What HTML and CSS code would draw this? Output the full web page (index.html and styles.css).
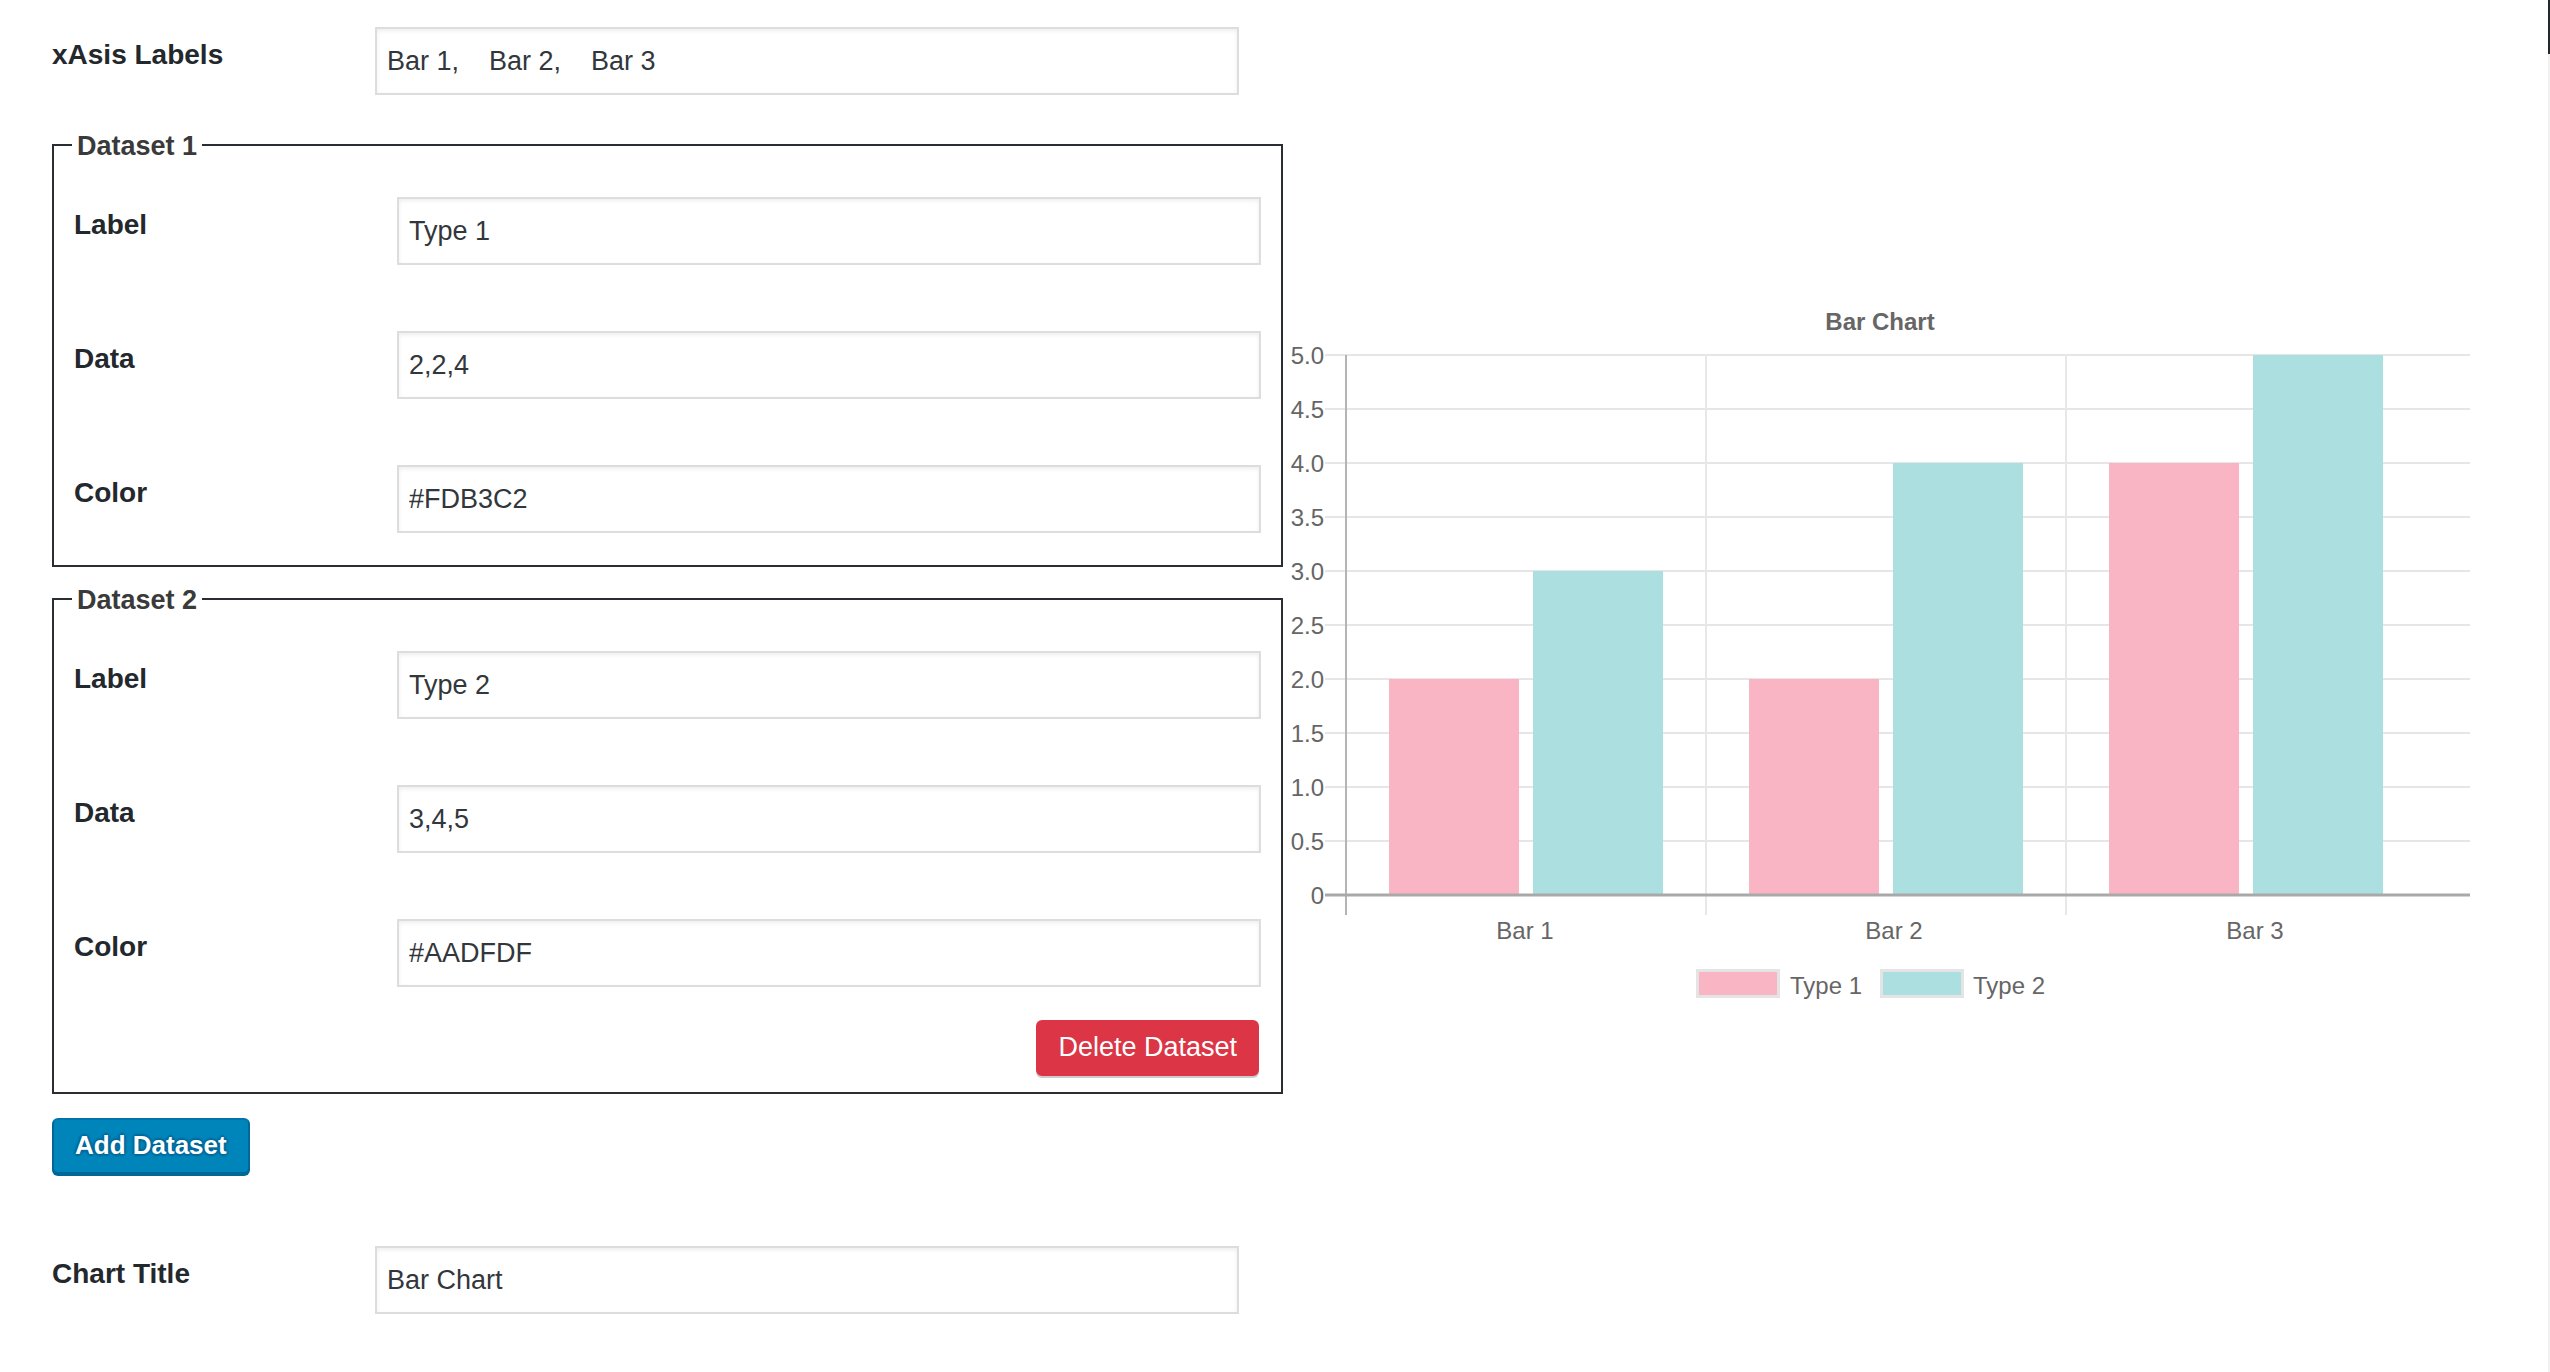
FILE: index.html
```html
<!DOCTYPE html>
<html lang="en">
<head>
<meta charset="utf-8">
<title>Bar Chart Builder</title>
<link rel="stylesheet" href="styles.css">
</head>
<body>
<div class="page">
  <div class="form-col">
    <div class="row">
      <label class="lbl">xAsis Labels</label>
      <input class="ctl" type="text" value="Bar 1,    Bar 2,    Bar 3">
    </div>

    <fieldset class="dataset ds1">
      <legend>Dataset 1</legend>
      <div class="rows">
        <div class="row"><label class="lbl">Label</label><input class="ctl" type="text" value="Type 1"></div>
        <div class="row"><label class="lbl">Data</label><input class="ctl" type="text" value="2,2,4"></div>
        <div class="row"><label class="lbl">Color</label><input class="ctl" type="text" value="#FDB3C2"></div>
      </div>
    </fieldset>

    <fieldset class="dataset ds2">
      <legend>Dataset 2</legend>
      <div class="rows">
        <div class="row"><label class="lbl">Label</label><input class="ctl" type="text" value="Type 2"></div>
        <div class="row"><label class="lbl">Data</label><input class="ctl" type="text" value="3,4,5"></div>
        <div class="row"><label class="lbl">Color</label><input class="ctl" type="text" value="#AADFDF"></div>
      </div>
      <div class="actions"><button class="btn btn-danger" type="button">Delete Dataset</button></div>
    </fieldset>

    <div class="add-wrap"><button class="btn btn-primary" type="button">Add Dataset</button></div>

    <div class="row title-row">
      <label class="lbl">Chart Title</label>
      <input class="ctl" type="text" value="Bar Chart">
    </div>
  </div>

  <div class="chart-col">
    <svg class="chart" width="1200" height="760" viewBox="0 0 1200 760" xmlns="http://www.w3.org/2000/svg">
      <text class="c-title" x="597" y="49.5" text-anchor="middle">Bar Chart</text>

      <g class="grid-h">
        <line x1="42" y1="75" x2="1187" y2="75"/>
        <line x1="42" y1="129" x2="1187" y2="129"/>
        <line x1="42" y1="183" x2="1187" y2="183"/>
        <line x1="42" y1="237" x2="1187" y2="237"/>
        <line x1="42" y1="291" x2="1187" y2="291"/>
        <line x1="42" y1="345" x2="1187" y2="345"/>
        <line x1="42" y1="399" x2="1187" y2="399"/>
        <line x1="42" y1="453" x2="1187" y2="453"/>
        <line x1="42" y1="507" x2="1187" y2="507"/>
        <line x1="42" y1="561" x2="1187" y2="561"/>
      </g>
      <g class="grid-v">
        <line x1="423" y1="75" x2="423" y2="635"/>
        <line x1="783" y1="75" x2="783" y2="635"/>
      </g>

      <g class="bars-1">
        <rect x="106" y="399" width="130" height="216"/>
        <rect x="466" y="399" width="130" height="216"/>
        <rect x="826" y="183" width="130" height="432"/>
      </g>
      <g class="bars-2">
        <rect x="250" y="291" width="130" height="324"/>
        <rect x="610" y="183" width="130" height="432"/>
        <rect x="970" y="75" width="130" height="540"/>
      </g>

      <line class="axis-y" x1="63" y1="75" x2="63" y2="635"/>
      <line class="axis-zero" x1="42" y1="615" x2="1187" y2="615"/>

      <g class="ticks-y" text-anchor="end">
        <text x="41" y="83.5">5.0</text>
        <text x="41" y="137.5">4.5</text>
        <text x="41" y="191.5">4.0</text>
        <text x="41" y="245.5">3.5</text>
        <text x="41" y="299.5">3.0</text>
        <text x="41" y="353.5">2.5</text>
        <text x="41" y="407.5">2.0</text>
        <text x="41" y="461.5">1.5</text>
        <text x="41" y="515.5">1.0</text>
        <text x="41" y="569.5">0.5</text>
        <text x="41" y="623.5">0</text>
      </g>
      <g class="ticks-x" text-anchor="middle">
        <text x="242" y="658.5">Bar 1</text>
        <text x="611" y="658.5">Bar 2</text>
        <text x="972" y="658.5">Bar 3</text>
      </g>

      <g class="legend">
        <rect class="lg-1" x="414.5" y="690.5" width="81" height="26"/>
        <text x="507" y="713.5">Type 1</text>
        <rect class="lg-2" x="598.5" y="690.5" width="81" height="26"/>
        <text x="690" y="713.5">Type 2</text>
      </g>
    </svg>
  </div>
</div>
<div class="scrollbar"></div>
</body>
</html>
```

FILE: styles.css
```css
html, body {
  margin: 0;
  padding: 0;
  background: #ffffff;
}

body {
  font-family: "Liberation Sans", Arial, Helvetica, sans-serif;
  color: #23282d;
}

.page {
  display: flex;
  align-items: flex-start;
  padding: 27px 0 0 52px;
}

.form-col {
  width: 1231px;
  flex: none;
  display: flex;
  flex-direction: column;
}

.row {
  display: grid;
  grid-template-columns: 323px 864px;
  align-items: start;
}

.lbl {
  font-size: 28px;
  font-weight: bold;
  line-height: 40px;
  padding-top: 8px;
  color: #23282d;
}

.ctl {
  box-sizing: border-box;
  width: 864px;
  height: 68px;
  margin: 0;
  padding: 0 10px;
  border: 2px solid #dddddd;
  border-radius: 0;
  background: #ffffff;
  box-shadow: inset 0 2px 4px rgba(0, 0, 0, 0.07);
  font-family: "Liberation Sans", Arial, Helvetica, sans-serif;
  font-size: 27px;
  color: #32373c;
  outline: none;
}

.dataset {
  margin: 29px 0 0 0;
  min-width: 0;
  padding: 32px 20px 32px 20px;
  border: 2px solid #2a2e33;
}

.ds2 {
  margin-top: 11px;
  padding-bottom: 16px;
}

.dataset legend {
  font-size: 27px;
  font-weight: bold;
  line-height: 38px;
  color: #3a3a3a;
  padding: 3px 5px 0;
  margin-left: -2px;
}

.rows {
  display: flex;
  flex-direction: column;
  gap: 66px;
}

.actions {
  display: flex;
  justify-content: flex-end;
  margin-top: 33px;
  padding-right: 2px;
}

.btn {
  box-sizing: border-box;
  height: 56px;
  margin: 0;
  padding: 0 20px 2px;
  border-width: 2px;
  border-style: solid;
  border-radius: 6px;
  font-family: "Liberation Sans", Arial, Helvetica, sans-serif;
  font-size: 26px;
  line-height: 50px;
  color: #ffffff;
  cursor: pointer;
}

.btn-danger {
  background: #dc3545;
  border-color: #dc3545;
  box-shadow: 0 2px 0 #cccccc;
  font-size: 27px;
  font-weight: normal;
}

.btn-primary {
  background: #0085ba;
  border-color: #0073aa #006799 #006799;
  box-shadow: 0 2px 0 #006799;
  font-weight: bold;
  padding: 0 21px 2px;
  text-shadow: 0 -2px 2px #006799, 2px 0 2px #006799, 0 2px 2px #006799, -2px 0 2px #006799;
}

.add-wrap {
  margin-top: 24px;
  display: flex;
}

.title-row {
  margin-top: 72px;
}

.chart-col {
  flex: none;
  margin-top: 253px;
}

.chart {
  display: block;
  font-family: "Liberation Sans", Arial, Helvetica, sans-serif;
}

.c-title {
  font-size: 24px;
  font-weight: bold;
  fill: #666666;
}

.grid-h line {
  stroke: #e6e6e6;
  stroke-width: 2;
}

.grid-v line {
  stroke: #e8e8e8;
  stroke-width: 2;
}

.axis-y {
  stroke: #b4b4b4;
  stroke-width: 2;
}

.axis-zero {
  stroke: #a9a9a9;
  stroke-width: 3;
}

.bars-1 rect,
.lg-1 {
  fill: #fab5c4;
}

.bars-2 rect,
.lg-2 {
  fill: #acdfe0;
}

.legend rect {
  stroke: #e4e4e4;
  stroke-width: 3;
}

.ticks-y text,
.ticks-x text,
.legend text {
  font-size: 24px;
  fill: #666666;
}

.scrollbar {
  position: fixed;
  top: 0;
  right: 0;
  bottom: 0;
  width: 2px;
  background: linear-gradient(#23282d 0, #23282d 54px, #f1f1f1 54px);
}
```
